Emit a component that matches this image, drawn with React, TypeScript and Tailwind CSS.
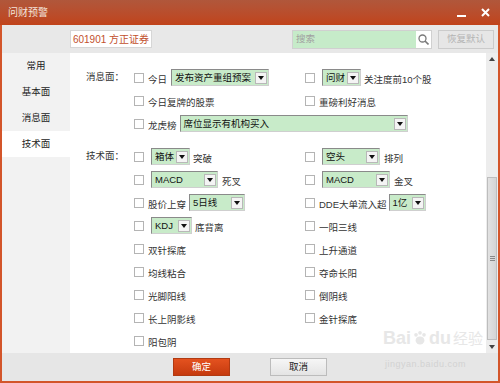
import type { ReactNode } from "react";

const Check = () => (
  <span className="w-[10px] h-[10px] border border-[#b4b4b4] bg-white shrink-0" />
);

const Select = ({ label, w }: { label: string; w: string }) => (
  <div
    className={`${w} h-[17px] shrink-0 flex items-center border border-t-[#8a8a8a] border-l-[#8a8a8a] border-r-[#cfcfcf] border-b-[#cfcfcf] bg-[#c8ebc9]`}
  >
    <span className="flex-1 pl-[3px] text-[9.5px] leading-none text-[#111] whitespace-nowrap overflow-hidden">
      {label}
    </span>
    <span className="w-[12px] h-[12px] mr-[1px] bg-[#f4f4f4] border border-[#b8b8b8] flex items-center justify-center">
      <svg width="6" height="4" viewBox="0 0 6 4">
        <path d="M0 0h6L3 4z" fill="#111" />
      </svg>
    </span>
  </div>
);

const Txt = ({ children }: { children: ReactNode }) => (
  <span className="text-[9.5px] leading-none text-[#333] whitespace-nowrap">{children}</span>
);

const Row = ({ label, a, b, wide }: { label?: string; a: ReactNode; b?: ReactNode; wide?: boolean }) => (
  <div className="flex items-center h-[23px]">
    <div className="w-[48px] shrink-0 text-[9.5px] text-[#333]">{label}</div>
    {wide ? (
      <div className="flex items-center">{a}</div>
    ) : (
      <>
        <div className="w-[171px] shrink-0 flex items-center">{a}</div>
        <div className="flex items-center">{b}</div>
      </>
    )}
  </div>
);

const menu = ["常用", "基本面", "消息面", "技术面"];

export default function App() {
  return (
    <div className="w-[500px] h-[383px] flex flex-col overflow-hidden relative font-['Liberation_Sans','Noto_Sans_CJK_SC',sans-serif]">
      {/* title bar */}
      <div className="h-[25px] shrink-0 flex items-center bg-gradient-to-b from-[#b0573b] to-[#c1431a] px-[8px]">
        <span className="text-[10px] text-[#f3e4dc]">问财预警</span>
        <div className="ml-auto flex items-center gap-[15px] mr-[2px]">
          <span className="w-[9px] h-[2px] bg-white mt-[7px]" />
          <svg width="9" height="9" viewBox="0 0 9 9">
            <path d="M1 1l7 7M8 1L1 8" stroke="#fff" strokeWidth="2" />
          </svg>
        </div>
      </div>

      <div className="flex-1 flex flex-col border-x-2 border-b-2 border-[#d3552a] bg-[#e8e8e8]">
        {/* toolbar */}
        <div className="h-[28px] shrink-0 flex items-center">
          <div className="ml-[68px] h-[18px] w-[82px] flex items-center justify-center bg-white border border-[#d6d6d6] text-[10px] text-[#c2502c]">
            601901 方正证券
          </div>
          <div className="ml-auto h-[19px] w-[140px] flex items-center bg-[#c6ebc9] border border-[#d0d0d0]">
            <span className="flex-1 pl-[3px] text-[9.5px] text-[#a0a0a0]">搜索</span>
            <span className="w-[15px] h-[17px] bg-white flex items-center justify-center">
              <svg width="11" height="11" viewBox="0 0 11 11">
                <circle cx="4.5" cy="4.5" r="3.5" fill="none" stroke="#7a7a7a" strokeWidth="1.3" />
                <path d="M7 7l3.5 3.5" stroke="#7a7a7a" strokeWidth="1.6" />
              </svg>
            </span>
          </div>
          <div className="ml-[6px] mr-[4px] h-[19px] w-[56px] flex items-center justify-center bg-[#e6e6e6] border border-[#cbcbcb] text-[9.5px] text-[#b4b4b4]">
            恢复默认
          </div>
        </div>

        {/* middle */}
        <div className="flex-1 flex">
          <div className="w-[68px] shrink-0 bg-[#f2f2f2] flex flex-col">
            {menu.map((m) => (
              <div
                key={m}
                className={`h-[26px] flex items-center justify-center text-[9.5px] text-[#222] ${m === "技术面" ? "bg-white" : ""}`}
              >
                {m}
              </div>
            ))}
          </div>

          <div className="flex-1 bg-white pl-[16px] pt-[13px]">
            <Row
              label="消息面："
              a={
                <>
                  <Check />
                  <span className="ml-[4px] mr-[4px]"><Txt>今日</Txt></span>
                  <Select label="发布资产重组预案" w="w-[98px]" />
                </>
              }
              b={
                <>
                  <Check />
                  <span className="ml-[7px]" />
                  <Select label="问财" w="w-[39px]" />
                  <span className="ml-[3px]"><Txt>关注度前10个股</Txt></span>
                </>
              }
            />
            <Row
              a={<><Check /><span className="ml-[4px]"><Txt>今日复牌的股票</Txt></span></>}
              b={<><Check /><span className="ml-[4px]"><Txt>重磅利好消息</Txt></span></>}
            />
            <Row
              wide
              a={
                <>
                  <Check />
                  <span className="ml-[4px] mr-[3px]"><Txt>龙虎榜</Txt></span>
                  <Select label="席位显示有机构买入" w="w-[228px]" />
                </>
              }
            />

            <div className="h-[10px]" />

            <Row
              label="技术面："
              a={<><Check /><span className="ml-[7px]" /><Select label="箱体" w="w-[39px]" /><span className="ml-[3px]"><Txt>突破</Txt></span></>}
              b={<><Check /><span className="ml-[7px]" /><Select label="空头" w="w-[58px]" /><span className="ml-[4px]"><Txt>排列</Txt></span></>}
            />
            <Row
              a={<><Check /><span className="ml-[7px]" /><Select label="MACD" w="w-[67px]" /><span className="ml-[4px]"><Txt>死叉</Txt></span></>}
              b={<><Check /><span className="ml-[7px]" /><Select label="MACD" w="w-[68px]" /><span className="ml-[4px]"><Txt>金叉</Txt></span></>}
            />
            <Row
              a={<><Check /><span className="ml-[4px] mr-[3px]"><Txt>股价上穿</Txt></span><Select label="5日线" w="w-[56px]" /></>}
              b={<><Check /><span className="ml-[4px] mr-[2px]"><Txt>DDE大单流入超</Txt></span><Select label="1亿" w="w-[37px]" /></>}
            />
            <Row
              a={<><Check /><span className="ml-[7px]" /><Select label="KDJ" w="w-[41px]" /><span className="ml-[3px]"><Txt>底背离</Txt></span></>}
              b={<><Check /><span className="ml-[4px]"><Txt>一阳三线</Txt></span></>}
            />
            {[
              ["双针探底", "上升通道"],
              ["均线粘合", "夺命长阳"],
              ["光脚阳线", "倒阴线"],
              ["长上阴影线", "金针探底"],
              ["阳包阴", ""],
            ].map(([x, y]) => (
              <Row
                key={x}
                a={<><Check /><span className="ml-[4px]"><Txt>{x}</Txt></span></>}
                b={y ? <><Check /><span className="ml-[4px]"><Txt>{y}</Txt></span></> : null}
              />
            ))}
          </div>

          {/* scrollbar */}
          <div className="w-[12px] shrink-0 bg-[#ededed] flex flex-col">
            <div className="h-[12px] flex items-center justify-center">
              <svg width="6" height="4" viewBox="0 0 6 4"><path d="M0 4h6L3 0z" fill="#444" /></svg>
            </div>
            <div className="h-[112px]" />
            <div className="h-[163px] mx-[1px] bg-gradient-to-r from-[#e2e2e2] to-[#d4d4d4] border border-[#bdbdbd] flex items-center justify-center">
              <div className="flex flex-col gap-[1px]">
                <span className="w-[5px] h-[1px] bg-[#888]" />
                <span className="w-[5px] h-[1px] bg-[#888]" />
                <span className="w-[5px] h-[1px] bg-[#888]" />
              </div>
            </div>
            <div className="flex-1" />
            <div className="h-[12px] flex items-center justify-center">
              <svg width="6" height="4" viewBox="0 0 6 4"><path d="M0 0h6L3 4z" fill="#444" /></svg>
            </div>
          </div>
        </div>

        {/* bottom bar */}
        <div className="h-[28px] shrink-0 flex items-center justify-center gap-[40px] bg-[#e6e6e6]">
          <button className="w-[57px] h-[18px] bg-gradient-to-b from-[#e4521f] to-[#c53a0e] border border-[#b13a12] text-[9.5px] text-white">
            确定
          </button>
          <button className="w-[57px] h-[18px] bg-gradient-to-b from-[#f6f6f6] to-[#e4e4e4] border border-[#bcbcbc] text-[9.5px] text-[#222]">
            取消
          </button>
        </div>
      </div>

      {/* watermark */}
      <div className="absolute left-[383px] top-[329px] flex items-center whitespace-nowrap text-[18px] leading-none font-bold text-[#e2e2e2] opacity-80 pointer-events-none">
        <span>Bai</span>
        <svg width="16" height="16" viewBox="0 0 20 20" className="mx-[1px]">
          <circle cx="5" cy="6" r="2.3" fill="#e2e2e2" />
          <circle cx="10" cy="3.5" r="2.3" fill="#e2e2e2" />
          <circle cx="15" cy="6" r="2.3" fill="#e2e2e2" />
          <ellipse cx="10" cy="13" rx="5.5" ry="5" fill="#e2e2e2" />
        </svg>
        <span>du</span>
        <span className="ml-[2px] text-[15px] font-normal">经验</span>
      </div>
      <div className="absolute left-[385px] top-[360px] whitespace-nowrap text-[9px] leading-none text-[#d2d2d2] tracking-[0.5px] pointer-events-none">
        jingyan.baidu.com
      </div>
    </div>
  );
}
